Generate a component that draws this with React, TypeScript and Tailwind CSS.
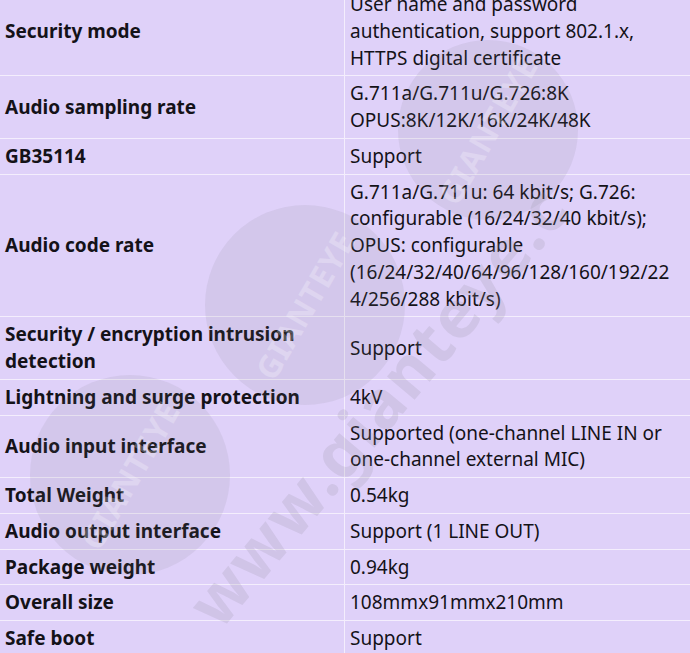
const rows: { label: string[]; value: string[] }[] = [
  {
    label: ["Security mode"],
    value: ["User name and password", "authentication, support 802.1.x,", "HTTPS digital certificate"],
  },
  { label: ["Audio sampling rate"], value: ["G.711a/G.711u/G.726:8K", "OPUS:8K/12K/16K/24K/48K"] },
  { label: ["GB35114"], value: ["Support"] },
  {
    label: ["Audio code rate"],
    value: [
      "G.711a/G.711u: 64 kbit/s; G.726:",
      "configurable (16/24/32/40 kbit/s);",
      "OPUS: configurable",
      "(16/24/32/40/64/96/128/160/192/22",
      "4/256/288 kbit/s)",
    ],
  },
  { label: ["Security / encryption intrusion", "detection"], value: ["Support"] },
  { label: ["Lightning and surge protection"], value: ["4kV"] },
  {
    label: ["Audio input interface"],
    value: ["Supported (one-channel LINE IN or", "one-channel external MIC)"],
  },
  { label: ["Total Weight"], value: ["0.54kg"] },
  { label: ["Audio output interface"], value: ["Support (1 LINE OUT)"] },
  { label: ["Package weight"], value: ["0.94kg"] },
  { label: ["Overall size"], value: ["108mmx91mmx210mm"] },
  { label: ["Safe boot"], value: ["Support"] },
];

// watermark stamps: circle centre + radius
const stamps = [
  { x: 488, y: 130, r: 90 },
  { x: 305, y: 305, r: 100 },
  { x: 130, y: 475, r: 100 },
];

function Watermark() {
  return (
    <div className="pointer-events-none absolute inset-0 overflow-hidden">
      {stamps.map((s, i) => (
        <div
          key={i}
          className="absolute flex items-center justify-center rounded-full bg-[rgba(120,115,130,0.11)]"
          style={{ left: s.x - s.r, top: s.y - s.r, width: s.r * 2, height: s.r * 2 }}
        >
          <span className="-rotate-[60deg] text-[32px] font-bold tracking-wide text-[rgba(255,255,255,0.25)]">
            GIANTEYE
          </span>
        </div>
      ))}
      <div className="absolute left-[200px] top-[570px] origin-left -rotate-[50deg] whitespace-nowrap text-[66px] leading-[90px] font-bold tracking-wide text-[rgba(150,145,160,0.2)]">
        www.gianteye.c
      </div>
    </div>
  );
}

export default function App() {
  return (
    <div className="relative h-[653px] w-[690px] overflow-hidden bg-[#dfd1f9] font-['Noto_Sans',sans-serif] text-[19px] leading-[26.75px] text-[#141218]">
      <div className="mt-[-14px] grid grid-cols-[344px_1fr] gap-px bg-[#f4eefd] py-px">
        {rows.map((r, i) => (
          <div key={i} className="contents">
            <div className="flex flex-col justify-center bg-[#dfd1f9] px-[5px] py-[4px] font-bold">
              {r.label.map((l, j) => (
                <span key={j}>{l}</span>
              ))}
            </div>
            <div className="flex flex-col justify-center bg-[#dfd1f9] px-[5px] py-[4px]">
              {r.value.map((v, j) => (
                <span key={j}>{v}</span>
              ))}
            </div>
          </div>
        ))}
      </div>
      <Watermark />
    </div>
  );
}
